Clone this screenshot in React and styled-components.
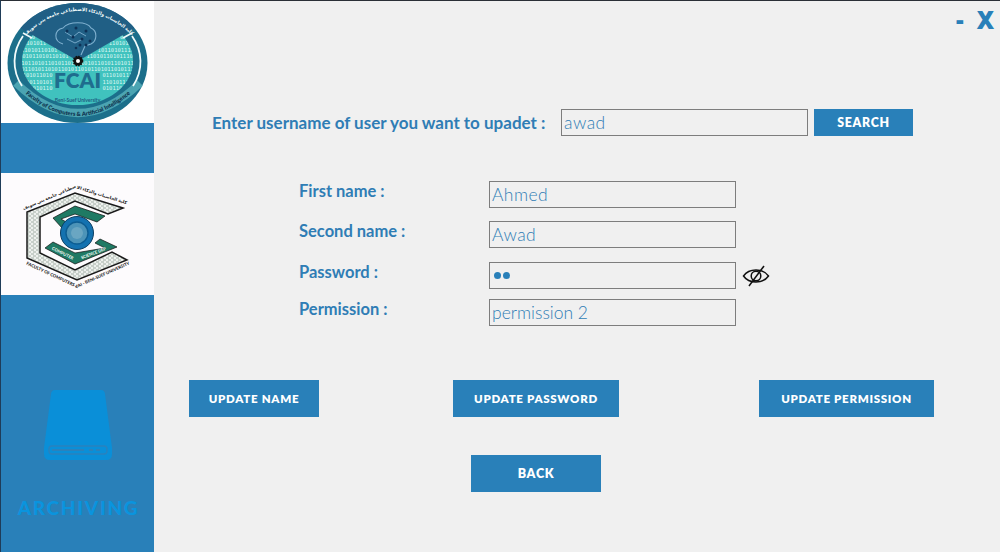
import React from "react";
import styled, { createGlobalStyle } from "styled-components";

const BLUE = "#2980b9";
const LABEL = "#2f7db5";
const FONT = `"Lato", "Open Sans", "Liberation Sans", sans-serif`;

const Global = createGlobalStyle`
  html, body { margin: 0; padding: 0; background: #f0f0f0; }
  * { box-sizing: border-box; }
`;

const Window = styled.div`
  width: 1000px; height: 552px; display: flex; overflow: hidden;
  background: #f0f0f0; font-family: ${FONT};
  border-top: 1px solid #2a2f36; border-left: 1px solid #1f3c58;
`;
const Sidebar = styled.aside`
  width: 153px; flex: none; display: flex; flex-direction: column; background: ${BLUE};
`;
const LogoPanel = styled.div`
  height: ${(p) => p.$h}px; background: ${(p) => p.$bg};
  margin-bottom: ${(p) => p.$mb || 0}px; display: flex;
  svg { display: block; }
`;
const Brand = styled.div`
  flex: 1; display: flex; flex-direction: column; align-items: center;
  padding-top: 95px; color: #0a94de;
`;
const BrandName = styled.div`
  margin-top: 36px; padding-left: 2px; font-size: 19px; line-height: 22px; font-weight: 900; letter-spacing: 1.75px;
`;
const Main = styled.main`
  flex: 1; display: flex; flex-direction: column;
`;
const WindowBar = styled.div`
  height: 108px; display: flex; justify-content: flex-end; align-items: flex-start;
  gap: 13px; padding: 4px 6px 0 0; color: ${BLUE}; font-family: "Open Sans", sans-serif;
  font-weight: 800; font-size: 24px; line-height: 30px;
`;
const SearchRow = styled.div`
  display: flex; align-items: center; padding-left: 58px; height: 27px;
`;
const SearchLabel = styled.label`
  width: 349px; color: ${LABEL}; font-size: 17px; font-weight: 700;
  white-space: nowrap;
`;
const Input = styled.div`
  width: 247px; height: 27px; flex: none; border: 1px solid #7d7d7d; background: #f0f0f0;
  color: #2f7db5; font-size: 17.5px; line-height: 25px; padding-left: 2px; font-weight: 300;
  white-space: nowrap; letter-spacing: ${(p) => p.$ls ?? 0.45}px;
`;
const Dots = styled.span`
  display: flex; gap: 2px; height: 100%; align-items: center; padding-left: 2px;
  i { width: 7px; height: 7px; border-radius: 50%; background: ${BLUE}; }
`;
const Button = styled.button`
  height: 37px; width: ${(p) => p.$w}px; border: 0; padding: 0; background: ${BLUE};
  color: #fff; font-family: ${FONT}; font-weight: 800; font-size: ${(p) => p.$fs || 11.5}px; letter-spacing: 0.7px;
  text-transform: uppercase;
`;
const SearchButton = styled(Button)`
  height: 27px; margin-left: 6px;
`;
const Form = styled.div`
  display: flex; flex-direction: column; margin-top: 45px; padding-left: 145px;
`;
const FormRow = styled.div`
  display: flex; align-items: center; height: 27px; margin-top: ${(p) => p.$mt || 0}px;
`;
const FieldLabel = styled.label`
  width: 190px; color: ${LABEL}; font-size: 16.5px; font-weight: 700; padding-bottom: 8px; white-space: nowrap;
`;
const EyeButton = styled.span`
  margin-left: 6px; display: flex; width: 28px; height: 22px;
`;
const Actions = styled.div`
  display: grid; grid-template-columns: 264px 306px auto; margin-top: 54px; padding-left: 35px;
`;
const BackRow = styled.div`
  margin-top: 38px; padding-left: 317px;
`;

const full = "10110101101011010110101101011";
const CHAR_W = 3.31;
const EDGE = 56;

/* Digit rows of the logo: each row is split where the wedge or the FCAI word covers it. */
const rows = [];
for (let i = 0; i < 9; i++) {
  const y = 38 + i * 6.4;
  let gap = 0;
  if (y < 60) gap = (60 - y) * 1.75 + 4;
  if (y > 70 && y < 91) gap = 25;
  const s = full.slice(i % 4) + full.slice(0, i % 4);
  const n = Math.max(0, Math.ceil((EDGE - gap) / CHAR_W));
  rows.push({ y, gap, left: s.slice(0, n), right: s.slice(-n) });
}

function FcaiLogo() {
  return (
    <svg width="153" height="122" viewBox="0 0 153 122">
      <rect width="153" height="122" fill="#fff" />
      <defs>
        <clipPath id="outerClip"><ellipse cx="76.5" cy="62" rx="70" ry="60" /></clipPath>
        <clipPath id="inner"><ellipse cx="76.5" cy="60" rx="55.5" ry="44" /></clipPath>
        <path id="topArc" d="M24 35 Q77 -15 132 35" />
        <path id="botArc" d="M15 84 Q77 146 139 84" />
      </defs>
      <ellipse cx="76.5" cy="62" rx="70" ry="60" fill="#1c6f8b" />
      <path d="M15 82 Q77 142 139 82" fill="none" stroke="#58b2bb" strokeWidth="8" opacity=".8" />
      <path d="M22 35 A62 51 0 0 0 21 85 M131 35 A62 51 0 0 1 132 85" fill="none" stroke="#f1fbfb" strokeWidth="1.8" />
      <g clipPath="url(#inner)">
        <rect width="153" height="122" fill="#40c2be" />
        <g fontFamily='"DejaVu Sans Mono", monospace' fontSize="5.5" fill="#d9f6f2">
          {rows.map((r) => (
            <React.Fragment key={r.y}>
              <text x={76.5 - r.gap} y={r.y} textAnchor="end">{r.left}</text>
              <text x={76.5 + r.gap} y={r.y}>{r.right}</text>
            </React.Fragment>
          ))}
        </g>
      </g>
      <g clipPath="url(#outerClip)">
        <path d="M0 16 L77 60 L153 16 V0 H0 Z" fill="#205f85" />
      </g>
      <path d="M22 32 L31 37 M131 32 L122 37" stroke="#f1fbfb" strokeWidth="1.6" />
      <path d="M62 43 C52 40 53 29 62 27 C68 20 86 20 90 27 C97 30 96 40 90 43 L84 45 L80 54"
        fill="none" stroke="#7fb0cf" strokeWidth="1.1" />
      <path d="M64 31 L72 36 L78 31 L85 35 M66 38 L74 42 L82 38" fill="none" stroke="#7fb0cf" strokeWidth=".9" />
      <g fill="#0e3257">
        <circle cx="66" cy="30" r="1.5" /><circle cx="75" cy="27" r="1.5" /><circle cx="85" cy="30" r="1.5" />
        <circle cx="72" cy="36" r="1.5" /><circle cx="81" cy="38" r="1.5" /><circle cx="89" cy="40" r="1.5" />
        <circle cx="79" cy="44" r="1.5" /><circle cx="85" cy="44" r="1.5" /><circle cx="75" cy="47" r="1.3" />
      </g>
      <circle cx="77" cy="60" r="4.5" fill="#111" stroke="#111" strokeWidth="1.6" strokeDasharray="1.6 1" />
      <circle cx="77" cy="60" r="2" fill="#fff" />
      <text x="76.5" y="87" textAnchor="middle" fontFamily='"Lato", sans-serif' fontWeight="800" fontSize="21" fill="#1f6d8e">FCAI</text>
      <text x="76.5" y="101" textAnchor="middle" fontFamily='"Lato", sans-serif' fontWeight="700" fontSize="5" fill="#1f5c82">Beni-Suef University</text>
      <text fontFamily='"Noto Sans", "DejaVu Sans", sans-serif' fontSize="4.8" fill="#f2fbfb" fontWeight="700">
        <textPath href="#topArc" startOffset="50%" textAnchor="middle">كلية الحاسبات والذكاء الاصطناعي جامعة بني سويف</textPath>
      </text>
      <text fontFamily='"Lato", sans-serif' fontSize="5.8" fontWeight="800" fill="#0f3550">
        <textPath href="#botArc" startOffset="50%" textAnchor="middle">Faculty of Computers &amp; Artificial Intelligence</textPath>
      </text>
    </svg>
  );
}

function CsLogo() {
  return (
    <svg width="153" height="122" viewBox="0 0 153 122">
      <rect width="153" height="122" fill="#fdfbfd" />
      <defs>
        <path id="csTop" d="M20 38 L74 15 L128 32" />
        <path id="csBot" d="M20 89 L76 115 L134 89" />
        <path id="csBandL" d="M48 75 L74 88" />
        <path id="csBandR" d="M76 88 L110 75" />
        <pattern id="speck" width="5" height="4" patternUnits="userSpaceOnUse">
          <rect width="5" height="4" fill="#eef1ee" />
          <path d="M0 1 H3 M2 3 H5" stroke="#8b9a92" strokeWidth=".8" />
        </pattern>
      </defs>
      <path d="M122 35 L74 20 L26 39 V85 L76 107 L126 87 L111 79 L74 97 L39 80 V44 L74 28 L107 41 Z"
        fill="url(#speck)" stroke="#1a1a1a" strokeWidth="1.5" />
      <path d="M52 45 L74 33 L104 43 L96 49 L74 41 L60 46 L67 50 L61 55 Z" fill="#1f7a64" stroke="#111" strokeWidth=".7" />
      <path d="M44 75 L52 69 L74 80 L104 75 L94 70 L99 66 L116 74 L74 91 Z" fill="#1f7a64" stroke="#111" strokeWidth=".7" />
      <circle cx="76" cy="60" r="16.5" fill="#1472b0" stroke="#0e3f62" strokeWidth="1" />
      <circle cx="76" cy="60" r="11" fill="#4d94b8" stroke="#0d5d92" strokeWidth="1.4" />
      <circle cx="76" cy="60" r="6" fill="#6aa6c2" />
      <text fontFamily='"Noto Sans", "DejaVu Sans", sans-serif' fontSize="4.4" fontWeight="700" fill="#222">
        <textPath href="#csTop" startOffset="50%" textAnchor="middle">كلية الحاسبات والذكاء الاصطناعي جامعة بني سويف</textPath>
      </text>
      <text fontFamily='"Lato", sans-serif' fontSize="4.2" fontWeight="900" fill="#e9f5ee">
        <textPath href="#csBandL" startOffset="50%" textAnchor="middle">COMPUTER</textPath>
      </text>
      <text fontFamily='"Lato", sans-serif' fontSize="4.2" fontWeight="900" fill="#e9f5ee">
        <textPath href="#csBandR" startOffset="50%" textAnchor="middle">SCIENCE DEP</textPath>
      </text>
      <text fontFamily='"Lato", sans-serif' fontSize="4.3" fontWeight="900" fill="#1a1a1a">
        <textPath href="#csBot" startOffset="50%" textAnchor="middle">FACULTY OF COMPUTERS &amp; AI - BENI-SUEF UNIVERSITY</textPath>
      </text>
    </svg>
  );
}

function DriveIcon() {
  return (
    <svg width="72" height="71" viewBox="0 0 72 71">
      <path d="M9 4 Q9.5 0 13 0 H59 Q62.5 0 63 4 L70 58 V64 Q70 70 64 70 H8 Q2 70 2 64 V58 Z" fill="#0a8fd8" />
      <rect x="7" y="56" width="58" height="8" rx="3" fill="none" stroke="#2a82bd" strokeWidth="1.4" />
      <path d="M10 60 H42 M47 60 H51 M54 60 H58" stroke="#2a82bd" strokeWidth="2.2" />
    </svg>
  );
}

function EyeSlash() {
  return (
    <svg width="28" height="22" viewBox="0 0 28 22" fill="none" stroke="#111" strokeWidth="1.5">
      <path d="M1.5 11 C7 3 21 3 26.5 11 C21 19 7 19 1.5 11 Z" />
      <circle cx="14" cy="11" r="4.8" />
      <path d="M22 1 L7 21" />
    </svg>
  );
}

export default function App() {
  return (
    <>
      <Global />
      <Window>
        <Sidebar>
          <LogoPanel $h={122} $bg="#fff" $mb={50}><FcaiLogo /></LogoPanel>
          <LogoPanel $h={122} $bg="#fdfbfd"><CsLogo /></LogoPanel>
          <Brand>
            <DriveIcon />
            <BrandName>ARCHIVING</BrandName>
          </Brand>
        </Sidebar>
        <Main>
          <WindowBar><span>-</span><span>X</span></WindowBar>
          <SearchRow>
            <SearchLabel>Enter username of user you want to upadet :</SearchLabel>
            <Input>awad</Input>
            <SearchButton $w={99} $fs={12.3}>Search</SearchButton>
          </SearchRow>
          <Form>
            <FormRow><FieldLabel>First name :</FieldLabel><Input>Ahmed</Input></FormRow>
            <FormRow $mt={13}><FieldLabel>Second name :</FieldLabel><Input>Awad</Input></FormRow>
            <FormRow $mt={14}>
              <FieldLabel>Password :</FieldLabel>
              <Input><Dots><i /><i /></Dots></Input>
              <EyeButton><EyeSlash /></EyeButton>
            </FormRow>
            <FormRow $mt={10}><FieldLabel>Permission :</FieldLabel><Input $ls={0}>permission 2</Input></FormRow>
          </Form>
          <Actions>
            <Button $w={130}>Update name</Button>
            <Button $w={166}>Update password</Button>
            <Button $w={175}>Update permission</Button>
          </Actions>
          <BackRow><Button $w={130} $fs={12.5}>Back</Button></BackRow>
        </Main>
      </Window>
    </>
  );
}
